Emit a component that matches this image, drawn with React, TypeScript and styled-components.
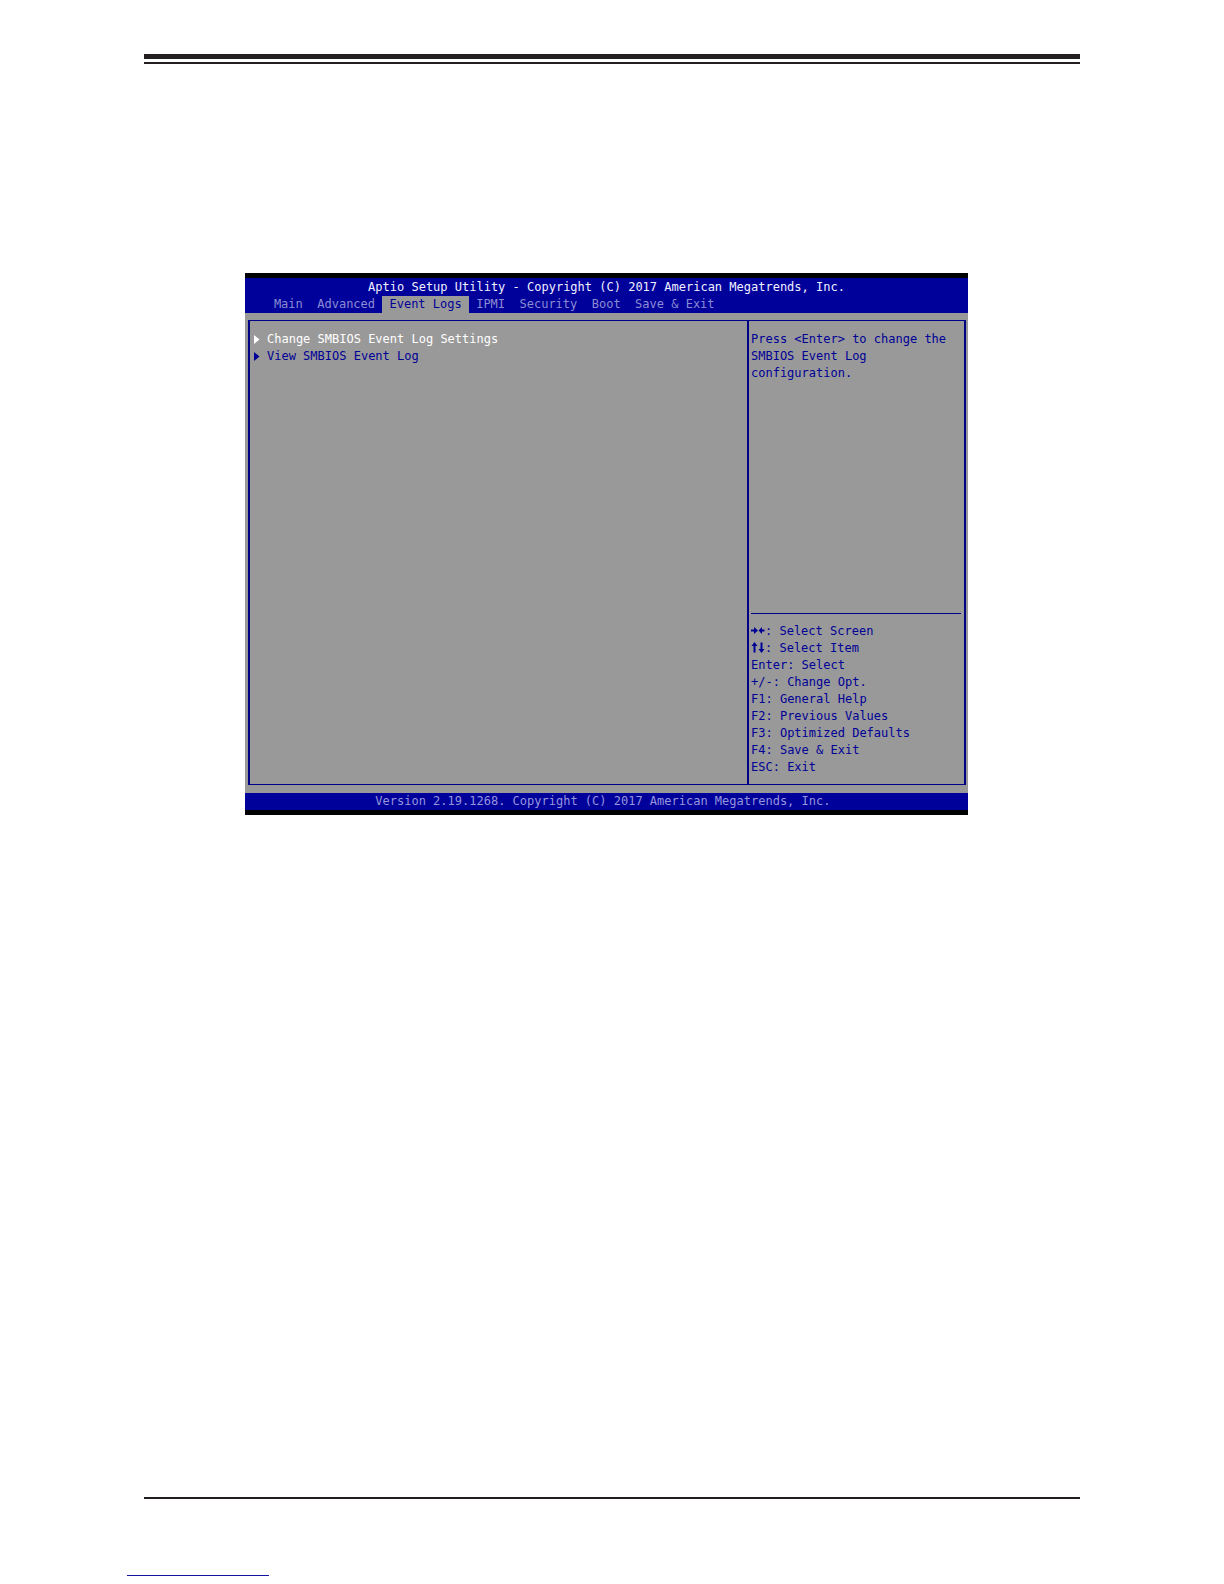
import React, { useState } from 'react'
import styled, { createGlobalStyle } from 'styled-components'

const GlobalStyle = createGlobalStyle`
  * {
    box-sizing: border-box;
  }

  body {
    margin: 0;
    background: #ffffff;
  }

  button {
    margin: 0;
    border: 0;
    font: inherit;
    cursor: pointer;
  }
`

const tabs = ['Main', 'Advanced', 'Event Logs', 'IPMI', 'Security', 'Boot', 'Save & Exit']

const entries = ['Change SMBIOS Event Log Settings', 'View SMBIOS Event Log']

const keys = [
  { name: 'Enter', action: 'Select' },
  { name: '+/-', action: 'Change Opt.' },
  { name: 'F1', action: 'General Help' },
  { name: 'F2', action: 'Previous Values' },
  { name: 'F3', action: 'Optimized Defaults' },
  { name: 'F4', action: 'Save & Exit' },
  { name: 'ESC', action: 'Exit' },
]

const Pointer = () => (
  <svg width='7' height='9' viewBox='0 0 7 9' aria-hidden='true'>
    <path d='M1 0 L6.5 4.5 L1 9 Z' fill='currentColor' />
  </svg>
)

const SideArrows = () => (
  <ArrowIcon viewBox='0 0 14 12' role='img' aria-label='Left and right arrows'>
    <path d='M0 4.5 H3 V2 L7 5.5 L3 9 V6.5 H0 Z' />
    <path d='M13.5 4.5 H11 V2 L7.5 5.5 L11 9 V6.5 H13.5 Z' />
  </ArrowIcon>
)

const UpDownArrows = () => (
  <ArrowIcon viewBox='0 0 14 12' role='img' aria-label='Up and down arrows'>
    <path d='M2.5 10.5 V4 H0.5 L3.5 0 L6.5 4 H4.5 V10.5 Z' />
    <path d='M9.5 0.5 V7 H7.5 L10.5 11 L13.5 7 H11.5 V0.5 Z' />
  </ArrowIcon>
)

const App = () => {
  const [activeTab, setActiveTab] = useState('Event Logs')
  const [selected, setSelected] = useState(entries[0])

  return (
    <Page>
      <GlobalStyle />
      <TopRule />
      <Main>
        <Screen>
          <Header>
            <Title>Aptio Setup Utility - Copyright (C) 2017 American Megatrends, Inc.</Title>
            <Tabs>
              {tabs.map((tab) => (
                <Tab key={tab} $active={tab === activeTab} onClick={() => setActiveTab(tab)}>
                  {tab}
                </Tab>
              ))}
            </Tabs>
          </Header>

          <Frame>
            <Entries>
              {entries.map((entry) => (
                <Entry key={entry} $active={entry === selected} onClick={() => setSelected(entry)}>
                  <Pointer />
                  {entry}
                </Entry>
              ))}
            </Entries>
            <Side>
              <HelpText>Press &lt;Enter&gt; to change the SMBIOS Event Log configuration.</HelpText>
              <KeyList>
                <li>
                  <SideArrows />: Select Screen
                </li>
                <li>
                  <UpDownArrows />: Select Item
                </li>
                {keys.map((key) => (
                  <li key={key.name}>
                    {key.name}: {key.action}
                  </li>
                ))}
              </KeyList>
            </Side>
          </Frame>

          <Version>Version 2.19.1268. Copyright (C) 2017 American Megatrends, Inc.</Version>
        </Screen>
      </Main>
      <BottomRule />
      <LinkRule />
    </Page>
  )
}

const Page = styled.div`
  display: flex;
  flex-direction: column;
  min-height: 100vh;
  padding: 54px 144px 8px;
`

const TopRule = styled.div`
  height: 10px;
  border-top: 5px solid #231f20;
  border-bottom: 2px solid #231f20;
`

const Main = styled.main`
  flex: 1;
  padding: 209px 112px 48px 101px;
`

const Screen = styled.section`
  border-top: 5px solid #000000;
  border-bottom: 5px solid #000000;
  background: #999999;
  color: #000096;
  font-family: 'DejaVu Sans Mono', 'Liberation Mono', monospace;
  font-size: 12px;
  line-height: 17px;
`

const Header = styled.header`
  background: #00009b;
`

const Title = styled.h1`
  margin: 0;
  padding-top: 1px;
  color: #f0f0ff;
  font-size: 12px;
  font-weight: normal;
  text-align: center;
`

const Tabs = styled.nav`
  display: flex;
  padding-left: 3ch;
`

const Tab = styled.button<{ $active: boolean }>`
  padding: 0 1ch;
  white-space: nowrap;
  background: ${({ $active }) => ($active ? '#999999' : 'transparent')};
  color: ${({ $active }) => ($active ? '#000096' : '#8c8cd2')};
`

const Frame = styled.div`
  display: grid;
  grid-template-columns: 1fr 217px;
  min-height: 465px;
  margin: 7px 2px 8px 3px;
  border: solid #000087;
  border-width: 1px 2px;
`

const Entries = styled.div`
  display: flex;
  flex-direction: column;
  align-items: flex-start;
  padding: 10px 3px;
`

const Entry = styled.button<{ $active: boolean }>`
  display: flex;
  align-items: center;
  gap: 7px;
  padding: 0;
  background: transparent;
  color: ${({ $active }) => ($active ? '#ffffff' : '#000096')};
`

const Side = styled.aside`
  display: flex;
  flex-direction: column;
  justify-content: space-between;
  padding: 10px 3px 8px 2px;
  border-left: 2px solid #000087;
`

const HelpText = styled.p`
  margin: 0;
`

const KeyList = styled.ul`
  margin: 0;
  padding: 9px 0 0;
  border-top: 1px solid #000087;
  list-style: none;
`

const ArrowIcon = styled.svg`
  width: 14px;
  height: 12px;
  fill: currentColor;
  vertical-align: -2px;
`

const Version = styled.footer`
  padding-right: 1ch;
  background: #00009b;
  color: #9696dc;
  text-align: center;
`

const BottomRule = styled.div`
  height: 2px;
  background: #231f20;
`

const LinkRule = styled.div`
  width: 142px;
  height: 1px;
  margin: 76px 0 0 -17px;
  background: #1414a0;
`

export default App
